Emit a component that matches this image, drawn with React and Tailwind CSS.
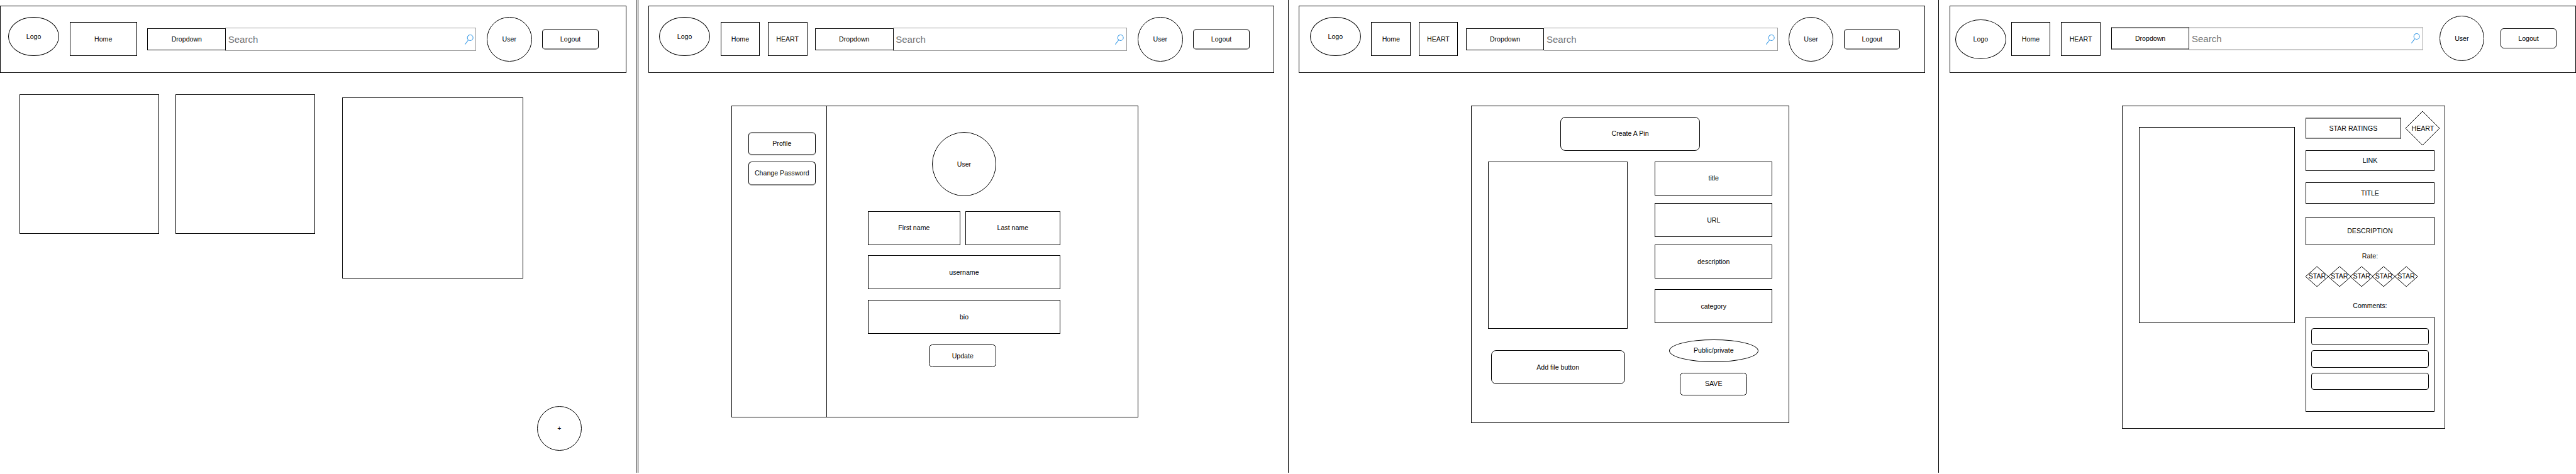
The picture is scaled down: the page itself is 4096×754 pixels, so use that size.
import React from "react";

/* The root redefines --spacing, so one spacing step is one wireframe unit. */

function Box({ className = "", children }) {
  return (
    <div className={`flex shrink-0 items-center justify-center whitespace-nowrap border border-black ${className}`}>
      {children}
    </div>
  );
}

function Round({ className = "", children }) {
  return <Box className={`rounded-[50%] ${className}`}>{children}</Box>;
}

function Diamond({ className = "", children }) {
  return (
    <div className={`grid shrink-0 grid-cols-1 grid-rows-1 place-items-center whitespace-nowrap ${className}`}>
      <svg
        className="h-full w-full overflow-visible [grid-area:1/1]"
        viewBox="0 0 100 100"
        preserveAspectRatio="none"
        fill="none"
        stroke="#000"
        strokeWidth="1"
      >
        <polygon points="50,0 100,50 50,100 0,50" vectorEffect="non-scaling-stroke" />
      </svg>
      <span className="[grid-area:1/1]">{children}</span>
    </div>
  );
}

function Search({ className = "" }) {
  return (
    <div
      className={`-ml-1 flex shrink-0 items-center justify-between border border-l-0 border-[#999999] pr-4 pl-5 text-[15.04px] text-[#737373] ${className}`}
    >
      <span>Search</span>
      <svg className="h-18 w-16 overflow-visible" viewBox="0 0 16 18" fill="none" stroke="#3a9be6" strokeWidth="1.2">
        <circle cx="9.8" cy="5.6" r="5.1" />
        <path d="M6.6 9.6 0.4 17.6" />
      </svg>
    </div>
  );
}

function Header({ children }) {
  return (
    <header className="mt-10 flex h-121 w-1126 shrink-0 items-start border border-black">{children}</header>
  );
}

function HeaderWithHeart() {
  return (
    <Header>
      <Round className="mt-19 ml-19 h-71 w-91">Logo</Round>
      <Box className="mt-29 ml-19 h-61 w-71">Home</Box>
      <Box className="mt-29 ml-14 h-61 w-71">HEART</Box>
      <Box className="mt-40 ml-14 h-39 w-141">Dropdown</Box>
      <Search className="mt-39 h-41 w-421" />
      <Round className="mt-19 ml-19 h-81 w-81">User</Round>
      <Box className="mt-41 ml-19 h-37 w-101 rounded-[5px] border-y-2 border-y-[#808080]">Logout</Box>
    </Header>
  );
}

function HomeScreen() {
  return (
    <section className="flex h-850 w-1143 shrink-0 flex-col">
      <Header>
        <Round className="mt-19 ml-14 h-71 w-91">Logo</Round>
        <Box className="mt-29 ml-19 h-61 w-121">Home</Box>
        <Box className="mt-40 ml-19 h-39 w-141">Dropdown</Box>
        <Search className="mt-39 h-41 w-451" />
        <Round className="mt-19 ml-19 h-81 w-81">User</Round>
        <Box className="mt-41 ml-19 h-37 w-101 rounded-[5px] border-y-2 border-y-[#808080]">Logout</Box>
      </Header>
      <div className="flex items-start pl-35">
        <Box className="mt-39 h-251 w-251" />
        <Box className="mt-39 ml-29 h-251 w-251" />
        <Box className="mt-44 ml-49 h-326 w-326" />
      </div>
      <Round className="mt-229 ml-965 h-81 w-81">+</Round>
    </section>
  );
}

function ProfileScreen() {
  return (
    <section className="flex h-850 w-1168 shrink-0 flex-col border-l border-black pl-17">
      <HeaderWithHeart />
      <main className="mt-59 ml-150 flex h-561 w-731 shrink-0 border border-black">
        <aside className="flex w-170 shrink-0 flex-col border-r border-black pt-46 pl-29">
          <Box className="h-42 w-121 rounded-[5.5px] border-y-2 border-y-[#808080]">Profile</Box>
          <Box className="mt-11 h-44 w-121 rounded-[5.5px] border-b-2 border-b-[#808080]">Change Password</Box>
        </aside>
        <div className="flex flex-col items-start pt-46 pl-74">
          <Round className="ml-115 h-116 w-116">User</Round>
          <div className="mt-26.5 flex gap-9">
            <Box className="h-61 w-166">First name</Box>
            <Box className="h-61 w-171">Last name</Box>
          </div>
          <Box className="mt-19 h-61 w-346">username</Box>
          <Box className="mt-19 h-61 w-346">bio</Box>
          <Box className="mt-19 ml-110 h-41 w-121 rounded-[5.5px]">Update</Box>
        </div>
      </main>
    </section>
  );
}

function CreatePinScreen() {
  return (
    <section className="flex h-850 w-1170 shrink-0 flex-col border-l border-black pl-19">
      <HeaderWithHeart />
      <main className="mt-59 ml-310 flex h-571 w-571 shrink-0 flex-col border border-black pt-19">
        <Box className="ml-159 h-61 w-251 rounded-[8px]">Create A Pin</Box>
        <div className="mt-19 ml-29 flex items-start gap-49">
          <div className="flex w-251 shrink-0 flex-col items-start">
            <Box className="h-301 w-251" />
            <Box className="mt-39 ml-5 h-61 w-241 rounded-[8px]">Add file button</Box>
          </div>
          <div className="flex w-211 shrink-0 flex-col">
            <Box className="h-61">title</Box>
            <Box className="mt-14 h-61">URL</Box>
            <Box className="mt-14 h-61">description</Box>
            <Box className="mt-19 h-61">category</Box>
            <Round className="mt-29 ml-25 h-41 w-161">Public/private</Round>
            <Box className="mt-19 ml-45 h-41 w-121 rounded-[5.5px]">SAVE</Box>
          </div>
        </div>
      </main>
    </section>
  );
}

function PinScreen() {
  return (
    <section className="flex h-850 w-1146 shrink-0 flex-col border-l border-black pl-19">
      <Header>
        <Round className="mt-24 ml-9 h-71 w-91">Logo</Round>
        <Box className="mt-29 ml-9 h-61 w-71">Home</Box>
        <Box className="mt-29 ml-19 h-61 w-71">HEART</Box>
        <Box className="mt-38 ml-19 h-40 w-141 border-y-2 border-y-[#808080]">Dropdown</Box>
        <Search className="mt-37 h-42 w-421 border-y-2 border-y-[#cacaca]" />
        <Round className="mt-17.5 ml-29 h-81 w-81">User</Round>
        <Box className="mt-40 ml-29 h-36 w-101 rounded-[5px]">Logout</Box>
      </Header>
      <main className="mt-59 ml-310 flex h-581 w-581 shrink-0 items-start border border-black">
        <Box className="mt-37 ml-29 h-353 w-281" />
        <div className="ml-19 flex w-231 shrink-0 flex-col pt-9">
          <div className="flex items-start gap-9">
            <Box className="mt-11 h-39 w-171 border-y-2 border-y-[#808080]">STAR RATINGS</Box>
            <Diamond className="h-61 w-61">HEART</Diamond>
          </div>
          <Box className="mt-9 h-38">LINK</Box>
          <Box className="mt-20 h-38">TITLE</Box>
          <Box className="mt-24 h-51">DESCRIPTION</Box>
          <div className="mt-9 flex h-20 items-center justify-center">Rate:</div>
          <div className="mt-9 flex">
            {[1, 2, 3, 4, 5].map((n) => (
              <Diamond key={n} className="-mr-1 h-36 w-41">
                STAR
              </Diamond>
            ))}
          </div>
          <div className="mt-25 flex h-20 items-center justify-center">Comments:</div>
          <div className="mt-10 flex h-171 shrink-0 flex-col gap-9 border border-black px-9 pt-19">
            <Box className="h-31 rounded-[4px]" />
            <Box className="h-31 rounded-[4px]" />
            <Box className="h-31 rounded-[4px]" />
          </div>
        </div>
      </main>
    </section>
  );
}

export default function App() {
  return (
    <div className="flex h-[754px] w-[4096px] items-start overflow-hidden bg-white font-['Liberation_Sans',Arial,sans-serif] text-[10.61px] leading-none text-black [--spacing:0.88447px]">
      <HomeScreen />
      <div className="h-850 w-4 shrink-0 border-l border-black" />
      <ProfileScreen />
      <CreatePinScreen />
      <PinScreen />
    </div>
  );
}
